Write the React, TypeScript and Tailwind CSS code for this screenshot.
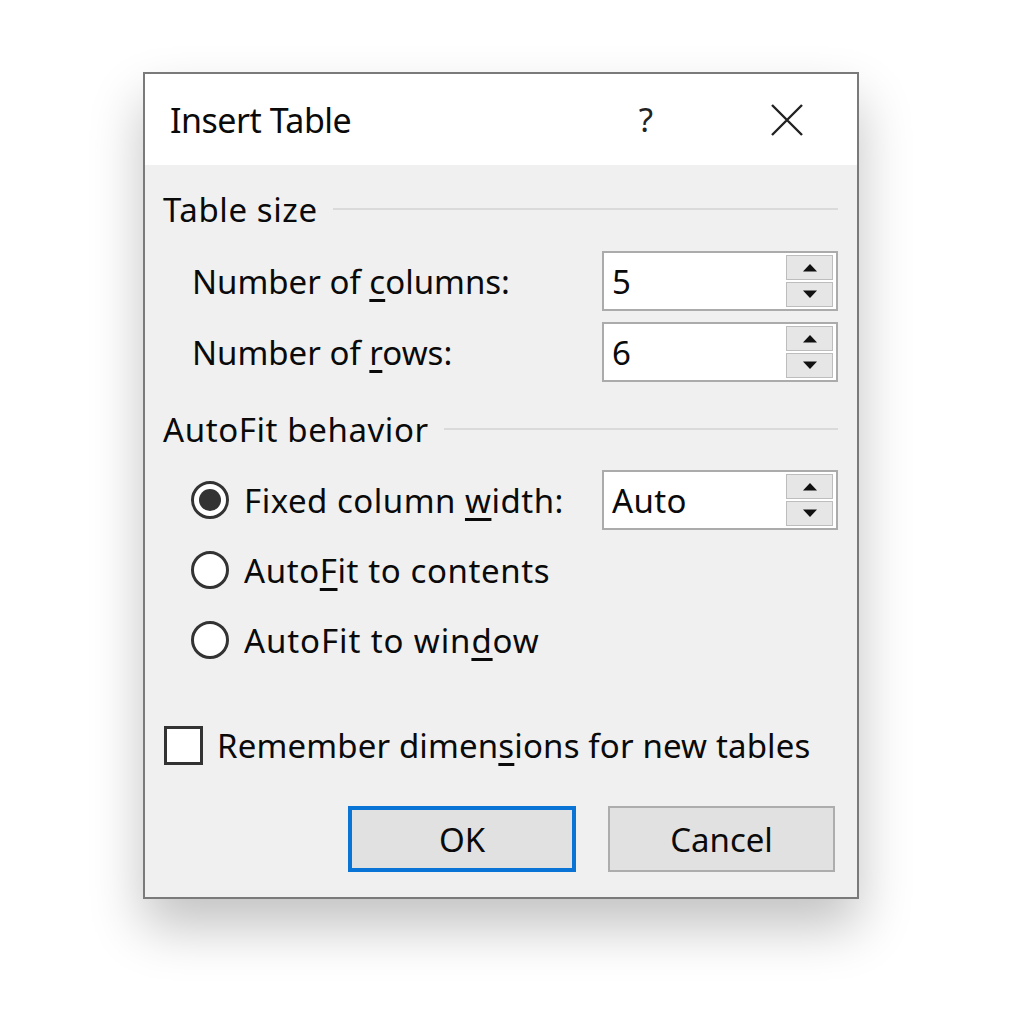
import React from "react";

const font = { fontFamily: '"Noto Sans", "Open Sans", Arial, sans-serif' };

function Spin({ value }: { value: string }) {
  return (
    <div className="flex h-[60px] w-[236px] items-center border-2 border-[#ababab] bg-white">
      <span className="flex-1 pl-[8px] text-[33px] leading-none tracking-[0.4px] text-[#0a0a0a]">{value}</span>
      <div className="mr-[3px] flex h-[52px] w-[47px] flex-col gap-[2px]">
        <div className="flex flex-1 items-center justify-center border border-[#bdbdbd] bg-[#e6e6e6]">
          <svg width="16" height="9" viewBox="0 0 16 9">
            <path d="M1 8.5 L8 1 L15 8.5 Z" fill="#111" />
          </svg>
        </div>
        <div className="flex flex-1 items-center justify-center border border-[#bdbdbd] bg-[#e6e6e6]">
          <svg width="16" height="9" viewBox="0 0 16 9">
            <path d="M1 0.5 L8 8 L15 0.5 Z" fill="#111" />
          </svg>
        </div>
      </div>
    </div>
  );
}

function Radio({ checked }: { checked?: boolean }) {
  return (
    <div className="flex h-[38px] w-[38px] items-center justify-center rounded-full border-[3px] border-[#333] bg-white">
      {checked && <div className="h-[22px] w-[22px] rounded-full bg-[#333]" />}
    </div>
  );
}

function GroupHeader({ label }: { label: string }) {
  return (
    <div className="flex h-[40px] items-center gap-[15px] pl-[18px] pr-[19px]">
      <span className="text-[33px] leading-none tracking-[0.6px] text-[#0a0a0a]">{label}</span>
      <div className="h-[2px] flex-1 bg-[#dadada]" />
    </div>
  );
}

export default function App() {
  return (
    <div className="min-h-[1015px] bg-white pl-[143px] pt-[72px]" style={font}>
      <div className="w-[716px] border-2 border-[#7a7a7a] shadow-[0_28px_50px_rgba(0,0,0,0.24)]">
        {/* title bar */}
        <div className="flex h-[91px] items-center bg-white pl-[25px]">
          <span className="flex-1 text-[34px] leading-none tracking-[-0.5px] text-[#0a0a0a]">Insert Table</span>
          <span className="mr-[118px] text-[33px] leading-none text-[#222]">?</span>
          <svg className="mr-[54px]" width="32" height="32" viewBox="0 0 32 32">
            <path d="M1 1 L31 31 M31 1 L1 31" stroke="#222" strokeWidth="2.4" />
          </svg>
        </div>

        <div className="flex flex-col bg-[#f0f0f0] pb-[25px] pt-[24px]">
          <GroupHeader label="Table size" />

          <div className="mt-[22px] flex items-center justify-between pl-[47px] pr-[19px]">
            <span className="text-[33px] leading-none text-[#0a0a0a]">
              Number of <u className="underline-offset-[5px]">c</u>olumns:
            </span>
            <Spin value="5" />
          </div>
          <div className="mt-[11px] flex items-center justify-between pl-[47px] pr-[19px]">
            <span className="text-[33px] leading-none text-[#0a0a0a]">
              Number of <u className="underline-offset-[5px]">r</u>ows:
            </span>
            <Spin value="6" />
          </div>

          <div className="mt-[27px]">
            <GroupHeader label="AutoFit behavior" />
          </div>

          <div className="mt-[21px] flex h-[60px] items-center justify-between pl-[46px] pr-[19px]">
            <div className="flex items-center gap-[15px]">
              <Radio checked />
              <span className="text-[33px] leading-none tracking-[0.5px] text-[#0a0a0a]">
                Fixed column <u className="underline-offset-[5px]">w</u>idth:
              </span>
            </div>
            <Spin value="Auto" />
          </div>
          <div className="mt-[10px] flex h-[60px] items-center gap-[15px] pl-[46px]">
            <Radio />
            <span className="text-[33px] leading-none tracking-[0.6px] text-[#0a0a0a]">
              Auto<u className="underline-offset-[5px]">F</u>it to contents
            </span>
          </div>
          <div className="mt-[10px] flex h-[60px] items-center gap-[15px] pl-[46px]">
            <Radio />
            <span className="text-[33px] leading-none tracking-[0.9px] text-[#0a0a0a]">
              AutoFit to win<u className="underline-offset-[5px]">d</u>ow
            </span>
          </div>

          <div className="mt-[55px] flex h-[40px] items-center gap-[14px] pl-[19px]">
            <div className="h-[39px] w-[39px] border-[3px] border-[#333] bg-white" />
            <span className="text-[33px] leading-none tracking-[0.15px] text-[#0a0a0a]">
              Remember dimen<u className="underline-offset-[5px]">s</u>ions for new tables
            </span>
          </div>

          <div className="mt-[41px] flex justify-end gap-[32px] pr-[22px]">
            <button className="flex h-[66px] w-[228px] items-center justify-center border-[4px] border-[#0a74d6] bg-[#e1e1e1] text-[33px] leading-none text-[#0a0a0a]">
              OK
            </button>
            <button className="flex h-[66px] w-[227px] items-center justify-center border-2 border-[#adadad] bg-[#e1e1e1] text-[33px] leading-none text-[#0a0a0a]">
              Cancel
            </button>
          </div>
        </div>
      </div>
    </div>
  );
}
